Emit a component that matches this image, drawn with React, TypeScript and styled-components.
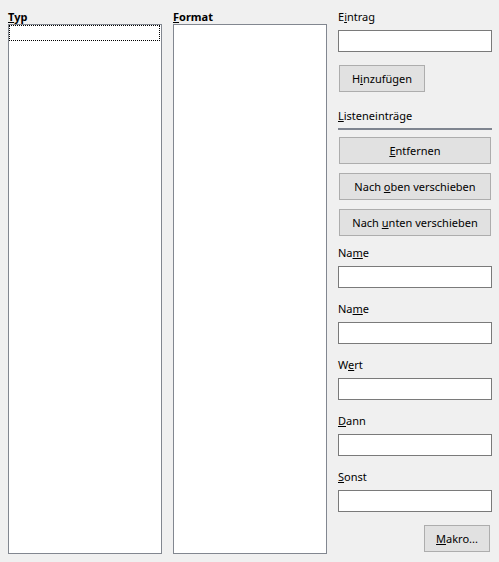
import styled, { createGlobalStyle } from "styled-components";

const GlobalStyle = createGlobalStyle`
    html, body {
        margin: 0;
        padding: 0;
        background: #f0f0f0;
    }
    body {
        font-family: "Noto Sans", "Open Sans", sans-serif;
        font-size: 11px;
        color: #000;
    }
`;

const Page = styled.div`
    display: grid;
    grid-template-columns: 154px 154px 154px;
    column-gap: 11px;
    padding: 8px 0 0 8px;
    height: 562px;
    box-sizing: border-box;
`;

const Column = styled.div`
    display: flex;
    flex-direction: column;
`;

const Label = styled.div<{ $bold?: boolean; $top?: number }>`
    height: 16px;
    line-height: 18px;
    font-weight: ${p => (p.$bold ? 700 : 400)};
    margin-top: ${p => p.$top ?? 0}px;
    white-space: nowrap;
`;

const ListBox = styled.div`
    height: 530px;
    background: #fff;
    border: 1px solid #828790;
    box-sizing: border-box;
`;

const FocusRow = styled.div`
    height: 16px;
    margin-right: 1px;
    border: 1px dotted #000;
    box-sizing: border-box;
`;

const Input = styled.div<{ $top?: number }>`
    height: 22px;
    margin-top: ${p => p.$top ?? 6}px;
    background: #fff;
    border: 1px solid #7a7a7a;
    box-sizing: border-box;
`;

const Button = styled.div<{ $top?: number; $width?: number; $align?: "start" | "end" | "stretch" }>`
    height: 27px;
    margin: ${p => p.$top ?? 0}px ${p => (p.$align === "end" ? 2 : 1)}px 0 1px;
    ${p => (p.$width ? `width: ${p.$width}px;` : "")}
    align-self: ${p => p.$align ?? "stretch"};
    display: flex;
    align-items: center;
    justify-content: center;
    background: #e1e1e1;
    border: 1px solid #adadad;
    box-sizing: border-box;
    white-space: pre;
`;

const Separator = styled.div`
    height: 2px;
    margin-top: 5px;
    background: #7f8590;
`;

const Key = styled.span`
    text-decoration: underline;
`;

function Mn({ text, at }: { text: string; at: number }) {
    return (
        <span>
            {text.slice(0, at)}
            <Key>{text[at]}</Key>
            {text.slice(at + 1)}
        </span>
    );
}

export default function App() {
    return (
        <>
            <GlobalStyle />
            <Page>
                <Column>
                    <Label $bold>
                        <Mn text="Typ" at={0} />
                    </Label>
                    <ListBox>
                        <FocusRow />
                    </ListBox>
                </Column>
                <Column>
                    <Label $bold>
                        <Mn text="Format" at={0} />
                    </Label>
                    <ListBox />
                </Column>
                <Column>
                    <Label>
                        <Mn text="Eintrag" at={1} />
                    </Label>
                    <Input />
                    <Button $top={13} $width={86} $align="start">
                        <Mn text="Hinzufügen" at={1} />
                    </Button>
                    <Label $top={15}>
                        <Mn text="Listeneinträge" at={0} />
                    </Label>
                    <Separator />
                    <Button $top={7}>
                        <Mn text="Entfernen" at={0} />
                    </Button>
                    <Button $top={9}>
                        <Mn text="Nach oben verschieben" at={5} />
                    </Button>
                    <Button $top={9}>
                        <Mn text="Nach unten verschieben" at={5} />
                    </Button>
                    <Label $top={8}>
                        <Mn text="Name" at={2} />
                    </Label>
                    <Input />
                    <Label $top={12}>
                        <Mn text="Name" at={2} />
                    </Label>
                    <Input />
                    <Label $top={12}>
                        <Mn text="Wert" at={1} />
                    </Label>
                    <Input />
                    <Label $top={12}>
                        <Mn text="Dann" at={0} />
                    </Label>
                    <Input />
                    <Label $top={12}>
                        <Mn text="Sonst" at={0} />
                    </Label>
                    <Input />
                    <Button $top={13} $width={66} $align="end">
                        <Mn text="Makro..." at={0} />
                    </Button>
                </Column>
            </Page>
        </>
    );
}
